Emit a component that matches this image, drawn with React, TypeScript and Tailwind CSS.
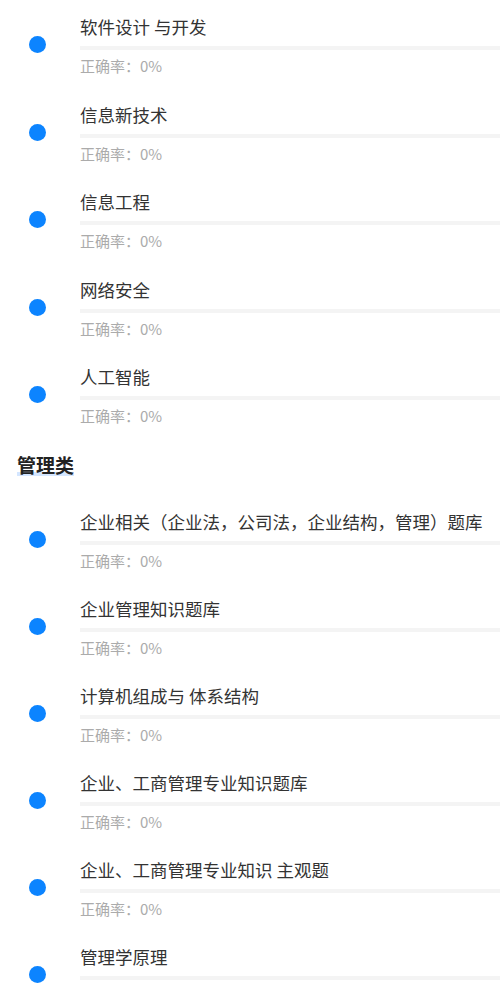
import React from 'react';

type Item = { title: string; rate: string };

const groupA: Item[] = [
  { title: '软件设计 与开发', rate: '0%' },
  { title: '信息新技术', rate: '0%' },
  { title: '信息工程', rate: '0%' },
  { title: '网络安全', rate: '0%' },
  { title: '人工智能', rate: '0%' },
];

const groupB: Item[] = [
  { title: '企业相关（企业法，公司法，企业结构，管理）题库', rate: '0%' },
  { title: '企业管理知识题库', rate: '0%' },
  { title: '计算机组成与 体系结构', rate: '0%' },
  { title: '企业、工商管理专业知识题库', rate: '0%' },
  { title: '企业、工商管理专业知识 主观题', rate: '0%' },
  { title: '管理学原理', rate: '0%' },
];

function Row({ item, tall }: { item: Item; tall?: boolean }) {
  return (
    <div className={`flex items-start ${tall ? 'h-[87.5px]' : 'h-[87px]'}`}>
      <div className="w-[80px] shrink-0 pt-[33px] pl-[29px]">
        <div className="w-[17px] h-[17px] rounded-full bg-[#0c84ff]" />
      </div>
      <div className="flex-1 pt-[12px]">
        <div className="text-[17.5px] leading-[24px] text-[#333333] whitespace-nowrap">{item.title}</div>
        <div className="mt-[7px] h-[4px] bg-[#f4f4f4]" />
        <div className="mt-[6px] text-[15px] leading-[20px] text-[#ababab]">正确率：{item.rate}</div>
      </div>
    </div>
  );
}

export default function App() {
  return (
    <div className="w-[500px] h-[986px] bg-white overflow-hidden font-['Noto_Sans_CJK_SC','Noto_Sans',sans-serif]">
      <div className="pt-[3px]">
        {groupA.map((it) => (
          <Row key={it.title} item={it} tall />
        ))}
      </div>
      {/* section header */}
      <div className="pl-[17px] pt-[12px] pb-[20px]">
        <span className="inline-block text-[19px] leading-[24px] font-bold text-[#222222] bg-[linear-gradient(to_top,transparent_1px,#d4e6ff_1px,#d4e6ff_5px,transparent_5px)]">
          管理类
        </span>
      </div>
      <div>
        {groupB.map((it) => (
          <Row key={it.title} item={it} />
        ))}
      </div>
    </div>
  );
}
